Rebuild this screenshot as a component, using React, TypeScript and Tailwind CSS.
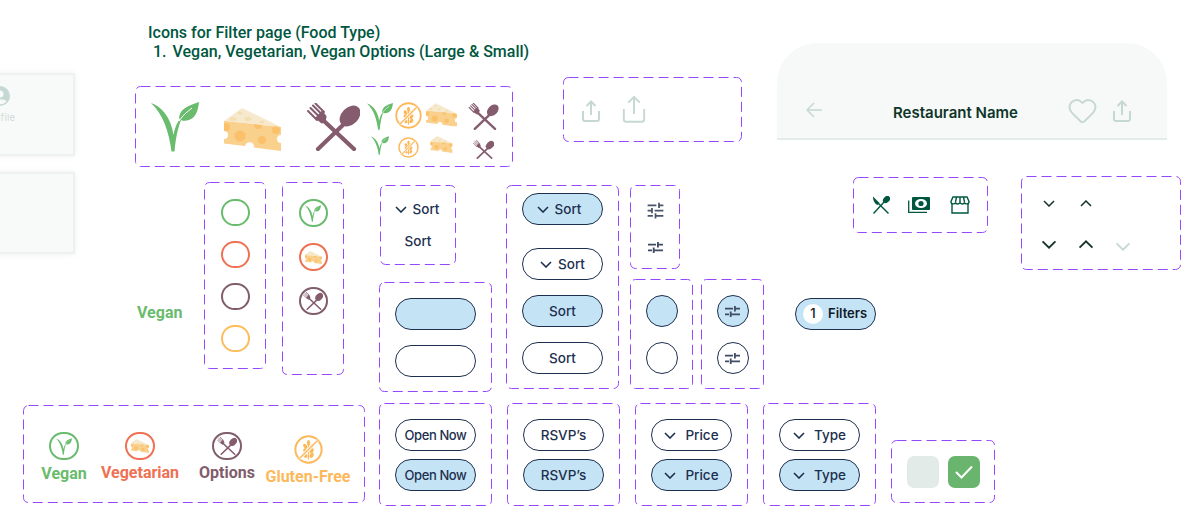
import type { ReactNode } from "react";
import { Heart } from "lucide-react";
import { MdTune } from "react-icons/md";

const GREEN = "#69BB6D";
const PLUM = "#855C6E";
const WHEAT = "#FDB85A";
const PALE = "#C6D8D3";

const Frame = ({ className, children }: { className: string; children?: ReactNode }) => (
  <div className={`absolute ${className}`}>
    <svg className="pointer-events-none absolute inset-0 h-full w-full">
      <rect
        x="0.5"
        y="0.5"
        rx="5"
        fill="none"
        stroke="#9747FF"
        strokeDasharray="10 5"
        className="[width:calc(100%-1px)] [height:calc(100%-1px)]"
      />
    </svg>
    {children}
  </div>
);

const VeganIcon = ({ className }: { className: string }) => (
  <svg viewBox="0 0 48 50" className={className}>
    <path
      fill={GREEN}
      d="M0 1C10 4 20 15 22.500 33C24 24 28 17 32 14C28 21 25 33 23.500 49.500L20.500 49.500C18 30 12 12 0 1Z"
    />
    <path fill={GREEN} d="M28 16C29 7 36 4 48 0C47 10 44 16 38 18C34 19.500 30 19 28 16Z" />
    <path fill="none" stroke="#fff" strokeWidth="1" d="M28 19C32 13 36 10 41 6" />
  </svg>
);

const CheeseIcon = ({ className }: { className: string }) => (
  <svg viewBox="0 0 57 43" className={className}>
    <clipPath id="cheese-front">
      <path d="M0 13L57 19V27A4 4 0 0 0 57 35V43L30 39.500A4.500 4.500 0 0 0 21 38L0 35.500V31A4 4 0 0 0 0 23Z" />
    </clipPath>
    <path fill="#F6E9CE" d="M0 13L18 0L57 19Z" />
    <ellipse cx="9" cy="11" rx="3.500" ry="2" fill="#F4DFB3" />
    <ellipse cx="24" cy="11" rx="3.500" ry="2" fill="#F4DFB3" />
    <ellipse cx="38" cy="14" rx="2.500" ry="1.500" fill="#F4DFB3" />
    <ellipse cx="16" cy="5" rx="2.500" ry="1.500" fill="#F4DFB3" />
    <g clipPath="url(#cheese-front)">
      <rect width="57" height="43" fill="#F9D08C" />
      <circle cx="16" cy="28" r="5.500" fill="#FBC06A" />
      <circle cx="38" cy="32" r="4" fill="#FBC06A" />
      <circle cx="34" cy="17" r="4" fill="#FBC06A" />
      <circle cx="52" cy="22" r="4" fill="#FBC06A" />
      <circle cx="2" cy="19" r="4" fill="#FBC06A" />
    </g>
  </svg>
);

const CutleryIcon = ({ className }: { className: string }) => (
  <svg viewBox="0 0 53 48" className={className} fill="none" stroke={PLUM} strokeLinecap="round">
    <path strokeWidth="4.200" d="M37 21L11 46" />
    <ellipse cx="43" cy="13" rx="8.500" ry="12" transform="rotate(45 43 13)" fill={PLUM} stroke="none" />
    <path strokeWidth="4.200" d="M17 18L47 46" />
    <path strokeWidth="2" d="M1 8L10 17M3.500 5L12.500 14M6 2.500L15 11.500M8.500 0.500L17 9" />
    <path fill={PLUM} stroke="none" d="M8 15L15 7.500L19.500 13C19.500 17 18 20 14.500 20.500Z" />
  </svg>
);

const GlutenIcon = ({ className }: { className: string }) => (
  <svg viewBox="0 0 32 32" className={className} fill="none">
    <circle cx="16" cy="16" r="14.500" stroke={WHEAT} strokeWidth="2.200" />
    <path stroke={WHEAT} strokeWidth="1.400" d="M16 9V27" />
    <g fill={WHEAT}>
      <ellipse cx="16" cy="8.500" rx="1.800" ry="3" />
      <ellipse cx="12.500" cy="12.500" rx="2" ry="3" transform="rotate(-35 12.500 12.500)" />
      <ellipse cx="19.500" cy="12.500" rx="2" ry="3" transform="rotate(35 19.500 12.500)" />
      <ellipse cx="12.500" cy="17.500" rx="2" ry="3" transform="rotate(-35 12.500 17.500)" />
      <ellipse cx="19.500" cy="17.500" rx="2" ry="3" transform="rotate(35 19.500 17.500)" />
      <ellipse cx="12.500" cy="22.500" rx="2" ry="3" transform="rotate(-35 12.500 22.500)" />
      <ellipse cx="19.500" cy="22.500" rx="2" ry="3" transform="rotate(35 19.500 22.500)" />
    </g>
    <path stroke="#fff" strokeWidth="3.400" d="M26 6L6 26" />
    <path stroke={WHEAT} strokeWidth="1.600" d="M26 6L6 26" />
  </svg>
);

const ShareIcon = ({ className, width = 2 }: { className: string; width?: number }) => (
  <svg viewBox="0 0 18 22" className={className} fill="none" stroke={PALE} strokeWidth={width}>
    <path d="M1 11V19A2 2 0 0 0 3 21H15A2 2 0 0 0 17 19V11" />
    <path d="M9 15V1.500M4.500 6L9 1.500L13.500 6" />
  </svg>
);

const Chevron = ({
  className,
  stroke = "#1D2F4F",
  width = 1.600,
}: {
  className: string;
  stroke?: string;
  width?: number;
}) => (
  <svg viewBox="0 0 12 7" className={className} fill="none" stroke={stroke} strokeWidth={width}>
    <path d="M1 1L6 6L11 1" />
  </svg>
);

const TwoBars = ({ className = "" }: { className?: string }) => (
  <svg viewBox="0 0 15 11" className={`h-[11px] w-[15px] ${className}`} fill="#3F4C63">
    <path d="M0 1.800H8V3.600H0ZM9 0H10.800V1.800H15V3.600H10.800V5.500H9ZM0 7.400H4V9.200H0ZM4.800 5.500H6.600V7.400H15V9.200H6.600V11H4.800Z" />
  </svg>
);

const Ring = ({
  border,
  className = "h-[27px] w-[29px]",
  children,
}: {
  border: string;
  className?: string;
  children?: ReactNode;
}) => (
  <div className={`flex shrink-0 items-center justify-center rounded-full border-2 ${border} ${className}`}>
    {children}
  </div>
);

const Pill = ({
  active,
  className = "",
  children,
}: {
  active?: boolean;
  className?: string;
  children?: ReactNode;
}) => (
  <div
    className={`flex h-[32px] w-[81px] shrink-0 items-center justify-center gap-[6px] rounded-full border-[1.25px] border-[#1D2F4F] font-['Inter',sans-serif] text-[13.500px] font-medium text-[#1D2F4F] ${
      active ? "bg-[#C4E4F5]" : "bg-white"
    } ${className}`}
  >
    {children}
  </div>
);

const PillFrame = ({
  className,
  first,
  second,
}: {
  className: string;
  first: ReactNode;
  second: ReactNode;
}) => (
  <Frame className={`flex h-[103px] w-[113px] flex-col items-center gap-[8px] pt-[16px] ${className}`}>
    {first}
    {second}
  </Frame>
);

const FoodLabel = ({ className, children }: { className: string; children: ReactNode }) => (
  <span className={`font-['Roboto',sans-serif] text-[16px] leading-[20px] font-bold whitespace-nowrap ${className}`}>
    {children}
  </span>
);

const App = () => {
  return (
    <div className="relative h-[520px] w-[1195px] overflow-hidden bg-white">
      {/* cut-off cards on the left of the board */}
      <div className="absolute top-[73px] -left-[75px] flex h-[83px] w-[150px] flex-col items-center border-2 border-[#EDF2F0] bg-[#F8FAF9] pt-[11px] shadow-[0_0_6px_rgba(200,215,210,0.35)]">
        <svg viewBox="0 0 20 20" className="h-[20px] w-[20px]">
          <circle cx="10" cy="10" r="10" fill={PALE} />
          <circle cx="10" cy="8" r="3.500" fill="#F8FAF9" />
          <path d="M3.500 15.500C5 12.500 15 12.500 16.500 15.500A9 9 0 0 1 3.500 15.500Z" fill="#F8FAF9" />
        </svg>
        <span className="mt-[5px] font-['Inter',sans-serif] text-[9.500px] leading-[14px] tracking-[0.3px] text-[#CFDAD7]">
          Profile
        </span>
      </div>
      <div className="absolute top-[172px] -left-[75px] h-[82px] w-[150px] border-2 border-[#EDF2F0] bg-[#F8FAF9] shadow-[0_0_6px_rgba(200,215,210,0.35)]" />

      <div className="absolute top-[23px] left-[148px] font-['Roboto',sans-serif] text-[16px] leading-[19px] font-medium text-[#00573F]">
        <p>Icons for Filter page (Food Type)</p>
        <p className="pl-[5px]">
          1.<span className="ml-[6px]">Vegan, Vegetarian, Vegan Options (Large &amp; Small)</span>
        </p>
      </div>

      <Frame className="top-[86px] left-[135px] flex h-[81px] w-[378px] items-start pl-[16px]">
        <VeganIcon className="mt-[16px] h-[50px] w-[48px]" />
        <CheeseIcon className="mt-[22px] ml-[25px] h-[43px] w-[57px]" />
        <CutleryIcon className="mt-[17px] ml-[26px] h-[48px] w-[53px]" />
        <div className="mt-[17px] ml-[7px] flex w-[26px] flex-col items-center gap-[6px]">
          <VeganIcon className="h-[27px] w-[26px]" />
          <VeganIcon className="h-[19px] w-[18px]" />
        </div>
        <div className="mt-[16px] ml-[2px] flex w-[27px] flex-col items-center gap-[8px]">
          <GlutenIcon className="h-[27px] w-[27px]" />
          <GlutenIcon className="h-[21px] w-[21px]" />
        </div>
        <div className="mt-[17px] ml-[4px] flex w-[31px] flex-col items-center gap-[9px]">
          <CheeseIcon className="h-[24px] w-[31px]" />
          <CheeseIcon className="h-[17px] w-[23px]" />
        </div>
        <div className="mt-[17px] ml-[11px] flex w-[31px] flex-col items-center gap-[10px]">
          <CutleryIcon className="h-[27px] w-[31px]" />
          <CutleryIcon className="h-[19px] w-[21px]" />
        </div>
      </Frame>

      <Frame className="top-[77px] left-[563px] flex h-[65px] w-[179px] items-start pl-[19px]">
        <ShareIcon className="mt-[23px] h-[22px] w-[18px]" />
        <ShareIcon className="mt-[18px] ml-[22px] h-[28px] w-[24px]" width={1.500} />
      </Frame>

      {/* restaurant header */}
      <header className="absolute top-[43px] left-[777px] flex h-[97px] w-[390px] items-start rounded-t-[40px] border-b-2 border-[#E3ECE9] bg-[#F7F9F8] pt-[55px] pl-[29px]">
        <svg viewBox="0 0 16 16" className="mt-[4px] h-[16px] w-[16px]" fill="none" stroke={PALE} strokeWidth="1.500">
          <path d="M16 8H1M8 1L1 8L8 15" />
        </svg>
        <h1 className="mt-[3px] ml-[71px] font-['Inter',sans-serif] text-[15px] leading-[24px] font-semibold text-[#0F3529]">
          Restaurant Name
        </h1>
        <Heart size={31} strokeWidth={1.500} color={PALE} className="-mt-[3px] ml-[49px]" />
        <ShareIcon className="mt-[2px] ml-[15px] h-[22px] w-[18px]" />
      </header>

      <Frame className="top-[182px] left-[204px] flex h-[187px] w-[62px] flex-col items-center gap-[15px] pt-[17px]">
        <Ring border="border-[#69BB6D]" />
        <Ring border="border-[#EE7153]" />
        <Ring border="border-[#805D6B]" />
        <Ring border="border-[#FDBD5C]" />
      </Frame>

      <Frame className="top-[182px] left-[282px] flex h-[193px] w-[62px] flex-col items-center gap-[16px] pt-[17px]">
        <Ring border="border-[#69BB6D]" className="h-[28px] w-[29px]">
          <VeganIcon className="h-[17px] w-[16px]" />
        </Ring>
        <Ring border="border-[#EE7153]" className="h-[28px] w-[29px]">
          <CheeseIcon className="h-[13px] w-[19px]" />
        </Ring>
        <Ring border="border-[#805D6B]" className="h-[28px] w-[29px]">
          <CutleryIcon className="h-[18px] w-[20px]" />
        </Ring>
      </Frame>

      <div className="absolute top-[300px] left-[137px]">
        <FoodLabel className="text-[#69BB6D]">Vegan</FoodLabel>
      </div>

      <Frame className="top-[185px] left-[380px] flex h-[80px] w-[76px] flex-col items-center gap-[12px] pt-[14px] font-['Inter',sans-serif] text-[13.500px] leading-[20px] font-medium text-[#1D2F4F]">
        <div className="flex items-center gap-[6px] pr-[2px]">
          <Chevron className="h-[7px] w-[12px]" />
          <span>Sort</span>
        </div>
        <span>Sort</span>
      </Frame>

      <Frame className="top-[282px] left-[379px] flex h-[110px] w-[113px] flex-col items-center gap-[15px] pt-[16px]">
        <Pill active />
        <Pill />
      </Frame>

      <Frame className="top-[185px] left-[506px] flex h-[204px] w-[113px] flex-col items-center pt-[8px]">
        <Pill active className="pr-[7px]">
          <Chevron className="h-[7px] w-[12px]" />
          Sort
        </Pill>
        <Pill className="mt-[23px]">
          <Chevron className="h-[7px] w-[12px]" />
          Sort
        </Pill>
        <Pill active className="mt-[15px]">
          Sort
        </Pill>
        <Pill className="mt-[15px]">Sort</Pill>
      </Frame>

      <Frame className="top-[185px] left-[630px] flex h-[84px] w-[50px] flex-col items-center pt-[15px]">
        <MdTune size={21} color="#4A5568" />
        <TwoBars className="mt-[21px]" />
      </Frame>

      <Frame className="top-[279px] left-[630px] flex h-[110px] w-[63px] flex-col items-center gap-[15px] pt-[16px]">
        <div className="h-[32px] w-[32px] rounded-full border-[1.25px] border-[#1D2F4F] bg-[#C4E4F5]" />
        <div className="h-[32px] w-[32px] rounded-full border-[1.25px] border-[#1D2F4F]" />
      </Frame>

      <Frame className="top-[279px] left-[701px] flex h-[110px] w-[63px] flex-col items-center gap-[15px] pt-[16px]">
        <div className="flex h-[32px] w-[32px] items-center justify-center rounded-full border-[1.25px] border-[#1D2F4F] bg-[#C4E4F5]">
          <TwoBars />
        </div>
        <div className="flex h-[32px] w-[32px] items-center justify-center rounded-full border-[1.25px] border-[#1D2F4F]">
          <TwoBars />
        </div>
      </Frame>

      <div className="absolute top-[298px] left-[795px] flex h-[32px] w-[81px] items-center rounded-full border-[1.25px] border-[#1D2F4F] bg-[#C4E4F5] pl-[7px] font-['Inter',sans-serif] text-[13px] font-semibold text-[#101828]">
        <span className="flex h-[20px] w-[20px] items-center justify-center rounded-full bg-white font-medium">1</span>
        <span className="ml-[5px]">Filters</span>
      </div>

      <Frame className="top-[177px] left-[853px] flex h-[56px] w-[135px] items-center pl-[19px]">
        <svg viewBox="0 0 18 18" className="h-[18px] w-[18px]" fill="none" stroke="#00573F">
          <path strokeWidth="1.400" d="M13 5L1.500 17.500" />
          <ellipse cx="14.500" cy="3.500" rx="3" ry="4" transform="rotate(45 14.500 3.500)" fill="#00573F" stroke="none" />
          <path strokeWidth="1.400" d="M6 7L16.500 17.500" />
          <path fill="#00573F" stroke="none" d="M1 0.500L7.500 7L5.500 9C3 8 1 5 1 0.500Z" />
        </svg>
        <svg viewBox="0 0 22 16" className="ml-[18px] h-[16px] w-[22px]" fill="none">
          <rect x="4" y="0" width="18" height="13" rx="1" fill="#00573F" />
          <ellipse cx="13" cy="6.500" rx="6" ry="4.500" fill="#fff" />
          <circle cx="13" cy="6.500" r="2.600" fill="#00573F" />
          <path stroke="#00573F" strokeWidth="1.300" d="M0.700 3.500V15.300H19" />
        </svg>
        <svg viewBox="0 0 20 18" className="ml-[20px] h-[18px] w-[20px]" fill="none" stroke="#00573F" strokeWidth="1.400">
          <path d="M2 8V17H18V8" />
          <path d="M3 1H17L19 5.500C19 8.500 15 8.500 14.500 6.500C14 8.500 11 8.500 10 6.500C9 8.500 6 8.500 5.500 6.500C5 8.500 1 8.500 1 5.500Z" />
          <path d="M6.500 1L5.500 6M10 1V6M13.500 1L14.500 6" />
        </svg>
      </Frame>

      <Frame className="top-[176px] left-[1021px] grid h-[94px] w-[160px] grid-cols-[37px_37px_37px] grid-rows-[14px_14px] place-items-center gap-y-[27px] pt-[20px] pl-[9px]">
        <Chevron className="h-[7px] w-[12px]" stroke="#15332B" width={1.500} />
        <Chevron className="mt-[1px] h-[7px] w-[12px] rotate-180" stroke="#15332B" width={1.500} />
        <span />
        <Chevron className="h-[9px] w-[16px]" stroke="#15332B" width={1.400} />
        <Chevron className="mt-[1px] h-[9px] w-[16px] rotate-180" stroke="#15332B" width={1.400} />
        <Chevron className="mt-[5px] h-[9px] w-[16px]" stroke={PALE} width={1.400} />
      </Frame>

      <Frame className="top-[405px] left-[23px] flex h-[98px] w-[342px] items-start pl-[18px]">
        <div className="flex w-[46px] flex-col items-center gap-[4px] pt-[27px]">
          <Ring border="border-[#69BB6D]" className="h-[28px] w-[30px]">
            <VeganIcon className="h-[17px] w-[16px]" />
          </Ring>
          <FoodLabel className="text-[#69BB6D]">Vegan</FoodLabel>
        </div>
        <div className="ml-[14px] flex w-[78px] flex-col items-center gap-[3px] pt-[27px]">
          <Ring border="border-[#EE7153]" className="h-[28px] w-[30px]">
            <CheeseIcon className="h-[14px] w-[20px]" />
          </Ring>
          <FoodLabel className="text-[#EE7153]">Vegetarian</FoodLabel>
        </div>
        <div className="ml-[20px] flex w-[56px] flex-col items-center gap-[3px] pt-[27px]">
          <Ring border="border-[#805D6B]" className="h-[28px] w-[30px]">
            <CutleryIcon className="h-[18px] w-[20px]" />
          </Ring>
          <FoodLabel className="text-[#805D6B]">Options</FoodLabel>
        </div>
        <div className="ml-[10px] flex w-[86px] flex-col items-center gap-[3px] pt-[30px]">
          <GlutenIcon className="h-[29px] w-[29px]" />
          <FoodLabel className="text-[#FDB85A]">Gluten-Free</FoodLabel>
        </div>
      </Frame>

      <PillFrame
        className="top-[403px] left-[379px]"
        first={<Pill className="pt-[1px] text-[13px] tracking-[-0.4px]">Open Now</Pill>}
        second={
          <Pill active className="pt-[1px] text-[13px] tracking-[-0.4px]">
            Open Now
          </Pill>
        }
      />
      <PillFrame className="top-[403px] left-[507px]" first={<Pill>RSVP’s</Pill>} second={<Pill active>RSVP’s</Pill>} />
      <PillFrame
        className="top-[403px] left-[635px]"
        first={
          <Pill className="gap-[9px]">
            <Chevron className="h-[7px] w-[12px]" />
            Price
          </Pill>
        }
        second={
          <Pill active className="gap-[9px]">
            <Chevron className="h-[7px] w-[12px]" />
            Price
          </Pill>
        }
      />
      <PillFrame
        className="top-[403px] left-[763px]"
        first={
          <Pill className="gap-[9px]">
            <Chevron className="h-[7px] w-[12px]" />
            Type
          </Pill>
        }
        second={
          <Pill active className="gap-[9px]">
            <Chevron className="h-[7px] w-[12px]" />
            Type
          </Pill>
        }
      />

      <Frame className="top-[440px] left-[891px] flex h-[63px] w-[104px] items-start gap-[9px] pt-[16px] pl-[16px]">
        <div className="h-[32px] w-[32px] rounded-[7px] bg-[#E3EBE8]" />
        <div className="flex h-[32px] w-[32px] items-center justify-center rounded-[7px] bg-[#69B56E]">
          <svg viewBox="0 0 18 14" className="h-[14px] w-[18px]" fill="none" stroke="#fff" strokeWidth="2">
            <path d="M1 7L6.500 12.500L17 1.500" />
          </svg>
        </div>
      </Frame>
    </div>
  );
};

export default App;
